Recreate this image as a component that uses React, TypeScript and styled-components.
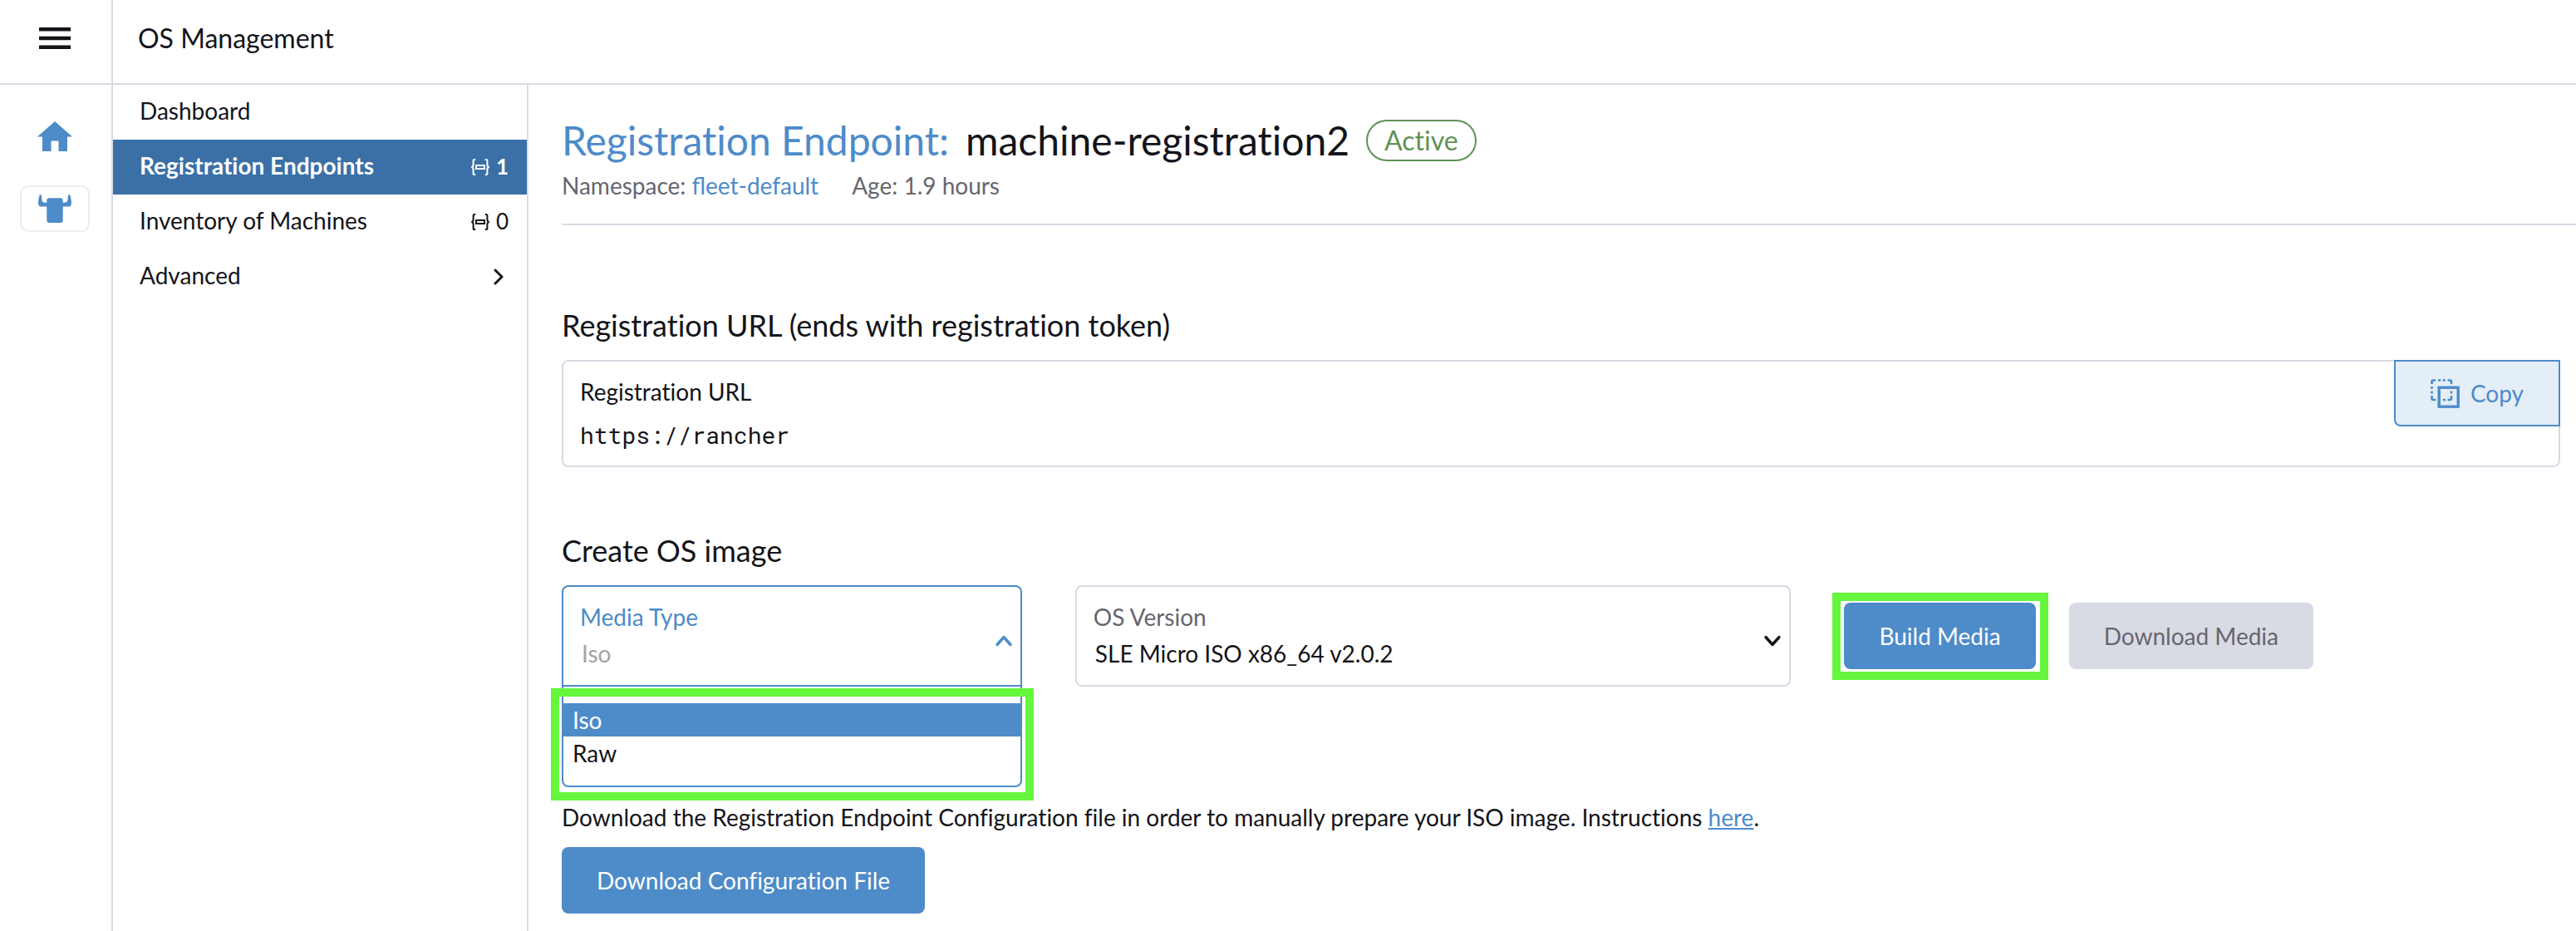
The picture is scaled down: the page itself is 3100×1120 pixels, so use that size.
import React, { useState } from 'react';
import styled, { createGlobalStyle, css } from 'styled-components';

const color = {
  text: '#141419',
  muted: '#66656f',
  faint: '#a3a3a6',
  border: '#d8dbe4',
  blue: '#4d8bc9',
  navActive: '#3b70a7',
  paleBlue: '#e4eef6',
  green: '#5f9156',
  mark: '#66f63e',
};

const GlobalStyle = createGlobalStyle`
  *, *::before, *::after { box-sizing: border-box; }
  body {
    margin: 0;
    background: #fff;
    color: ${color.text};
    font: 28px/36px Lato, "Open Sans", sans-serif;
    font-variant-ligatures: no-common-ligatures;
  }
  h1, h2, p, ul { margin: 0; padding: 0; font-weight: 400; }
  ul { list-style: none; }
  a { color: ${color.blue}; text-decoration: none; }
  svg { display: block; flex: none; }
  button, input, select {
    font: inherit;
    font-variant-ligatures: inherit;
    color: inherit;
    margin: 0;
  }
`;

const Page = styled.div`
  display: grid;
  grid-template: 102px 1fr / 136px 500px minmax(0, 1fr);
  min-height: 100vh;
`;

const MenuCell = styled.div`
  display: flex;
  align-items: center;
  justify-content: center;
  padding: 0 2px 8px 0;
  border-right: 2px solid ${color.border};
  border-bottom: 2px solid ${color.border};
`;

const IconButton = styled.button`
  padding: 0;
  border: 0;
  background: none;
  cursor: pointer;
`;

const Header = styled.header`
  grid-column: 2 / -1;
  display: flex;
  align-items: center;
  padding: 0 30px 8px;
  border-bottom: 2px solid ${color.border};
  font-size: 32px;
`;

const Rail = styled.nav`
  display: flex;
  flex-direction: column;
  align-items: center;
  gap: 31px;
  padding: 34px 2px 0 0;
  border-right: 2px solid ${color.border};
`;

const RailLink = styled.a<{ $boxed?: boolean }>`
  display: flex;
  align-items: center;
  justify-content: center;
  width: 84px;
  height: 56px;
  border: 2px solid ${(p) => (p.$boxed ? '#ececf2' : 'transparent')};
  border-radius: 10px;
`;

const SideNav = styled.nav`
  border-right: 2px solid ${color.border};
`;

const NavLink = styled.a<{ $active?: boolean }>`
  display: flex;
  align-items: center;
  justify-content: space-between;
  height: 66px;
  padding: 0 22px 0 32px;
  color: ${color.text};
  ${(p) =>
    p.$active &&
    css`
      background: ${color.navActive};
      color: #fff;
      font-weight: 700;
    `}
`;

const NavLabel = styled.span`
  padding-bottom: 4px;
`;

const Count = styled.span`
  display: flex;
  align-items: center;
  gap: 8px;
  font-size: 26px;
`;

const CountValue = styled.span`
  padding-bottom: 2px;
`;

const ArrowSlot = styled.span`
  padding-right: 6px;
`;

const Main = styled.main`
  padding: 40px 0 20px 40px;
`;

const Masthead = styled.div`
  padding-bottom: 27px;
  border-bottom: 2px solid ${color.border};
`;

const TitleRow = styled.div`
  display: flex;
  align-items: center;
  gap: 20px;
`;

const Title = styled.h1`
  font-size: 48px;
  line-height: 54px;
  a { margin-right: 20px; }
`;

const Badge = styled.span`
  padding: 0 20px;
  border: 2px solid ${color.green};
  border-radius: 25px;
  color: ${color.green};
  font-size: 32px;
  line-height: 46px;
`;

const Meta = styled.div`
  display: flex;
  gap: 40px;
  margin-top: 8px;
  color: ${color.muted};
  line-height: 38px;
  a { font-variant-ligatures: normal; }
`;

const Body = styled.div`
  padding-right: 19px;
`;

const Heading = styled.h2<{ $gap: number }>`
  margin: ${(p) => p.$gap}px 0 20px;
  font-size: 36px;
  line-height: 44px;
`;

const UrlBox = styled.div`
  position: relative;
  display: flex;
  flex-direction: column;
  gap: 17px;
  padding: 18px 20px;
  border: 2px solid ${color.border};
  border-radius: 8px;
`;

const UrlInput = styled.input`
  width: 100%;
  height: 36px;
  padding: 0;
  border: 0;
  outline: 0;
  background: none;
  font-family: "Roboto Mono", "DejaVu Sans Mono", "Liberation Mono", monospace;
`;

const CopyButton = styled.button`
  position: absolute;
  top: -2px;
  right: -2px;
  display: flex;
  align-items: center;
  gap: 13px;
  height: 80px;
  padding: 0 42px;
  border: 2px solid ${color.blue};
  border-radius: 0 0 0 8px;
  background: ${color.paleBlue};
  color: ${color.blue};
  cursor: pointer;
`;

const BuildRow = styled.div`
  display: grid;
  grid-template-columns: 9fr 14fr 14fr;
  align-items: center;
  gap: 64px;
`;

const Field = styled.div<{ $open?: boolean }>`
  position: relative;
  display: flex;
  flex-direction: column;
  gap: 4px;
  height: 122px;
  padding: 16px 20px;
  border: 2px solid ${(p) => (p.$open ? color.blue : color.border)};
  border-radius: ${(p) => (p.$open ? '8px 8px 0 0' : '8px')};
  line-height: 40px;
  color: ${(p) => (p.$open ? color.blue : color.text)};

  label { color: ${(p) => (p.$open ? color.blue : color.muted)}; }
  > svg {
    position: absolute;
    top: 56px;
    right: 8px;
    pointer-events: none;
  }
`;

const Select = styled.select<{ $faint?: boolean }>`
  appearance: none;
  width: 100%;
  height: 40px;
  padding: 0 2px;
  border: 0;
  outline: 0;
  background: none;
  color: ${(p) => (p.$faint ? color.faint : color.text)};
`;

const markBox = css`
  content: '';
  position: absolute;
  border: 10px solid ${color.mark};
  pointer-events: none;
`;

const Menu = styled.ul`
  position: absolute;
  top: 100%;
  left: -2px;
  right: -2px;
  height: 123px;
  padding-top: 20px;
  border: 2px solid ${color.blue};
  border-radius: 0 0 8px 8px;
  background: #fff;
  &::after {
    ${markBox}
    inset: 2px -16px -18px -15px;
  }
`;

const Option = styled.li<{ $active: boolean }>`
  padding: 0 11px;
  background: ${(p) => (p.$active ? color.blue : '#fff')};
  color: ${(p) => (p.$active ? '#fff' : color.text)};
  cursor: pointer;
`;

const Actions = styled.div`
  display: flex;
  gap: 40px;
`;

const Button = styled.button<{ $marked?: boolean }>`
  position: relative;
  height: 80px;
  padding: 0 42px;
  border: 0;
  border-radius: 8px;
  background: ${color.blue};
  color: #fff;
  white-space: nowrap;
  cursor: pointer;
  &:disabled {
    background: ${color.border};
    color: ${color.muted};
    cursor: not-allowed;
  }
  ${(p) =>
    p.$marked &&
    css`
      &::after {
        ${markBox}
        inset: -12px -15px -13px -14px;
      }
    `}
`;

const Note = styled.p`
  margin: 139px 0 18px;
  a { text-decoration: underline; }
`;

const MenuIcon = () => (
  <svg width="38" height="26" viewBox="0 0 38 26" fill="currentColor">
    <path d="M0 0h38v4.6H0zM0 10.8h38v4.4H0zM0 21.4h38V26H0z" />
  </svg>
);

const HomeIcon = () => (
  <svg width="42" height="36" viewBox="0 0 42 36" fill="currentColor">
    <path d="M21 0 42 18.5H36V36H25.5V23.5h-9V36H6V18.5H0z" />
  </svg>
);

const BullIcon = () => (
  <svg width="40" height="34" viewBox="0 0 40 34" fill="currentColor">
    <path d="M2.6 0C3.8 0 4.3 2 4.3 5.5c0 3 1.2 4.2 5.9 4.2V7.2q0-2.9 3-2.900h13.400q3 0 3 2.900v2.500c4.700 0 6-1.200 6-4.200C35.600 2 36.200 0 37.300 0 38.700 0 39 3.500 40 8.500 40 13 39 14.600 36.500 14.600H29.700V31q0 3-3 3H13.300q-3 0-3-3V14.600H3.500C1 14.600 0 13 0 9 .8 4 1.200 0 2.600 0z" />
  </svg>
);

const NamespacedIcon = () => (
  <svg width="22" height="20" viewBox="0 0 22 20" fill="none" stroke="currentColor" strokeWidth="2">
    <path d="M5.200 1H4Q2.600 1 2.600 2.600V7.500Q2.600 9.600.4 10 2.600 10.400 2.600 12.500v4.900Q2.600 19 4 19h1.200M16.800 1H18q1.400 0 1.400 1.600v4.900q0 2.100 2.200 2.500-2.200.4-2.200 2.500v4.900Q19.400 19 18 19h-1.200" />
    <path d="M6 8h10v4H6z" />
  </svg>
);

const ChevronRight = () => (
  <svg width="12" height="20" viewBox="0 0 12 20" fill="none" stroke="currentColor" strokeWidth="3" strokeLinecap="round" strokeLinejoin="round">
    <path d="M2 2l8 8-8 8" />
  </svg>
);

const Chevron = ({ up }: { up?: boolean }) => (
  <svg width="24" height="16" viewBox="0 0 24 16" fill="none" stroke="currentColor" strokeWidth="3.4" strokeLinecap="round" strokeLinejoin="round">
    <path d={up ? 'M4 13.500l8-9 8 9' : 'M4 4.500l8 9 8-9'} />
  </svg>
);

const CopyIcon = () => (
  <svg width="35" height="35" viewBox="0 0 35 35" fill="none" stroke="currentColor">
    <rect x="10.200" y="10.200" width="23" height="23" strokeWidth="3.400" />
    <g strokeWidth="2.600">
      <path d="M6 1.500H3Q1.500 1.500 1.500 3v3M20.500 1.500H23Q25 1.500 25 3v3M1.500 20v3q0 2 1.500 2h3.200M25 20v3q0 2-1.500 2h-3" />
      <path d="M9 1.500h3.200M14.700 1.500h3.200M1.500 9v2.800M1.500 14.600v2.800M25 14.600v2.800M15 25h3" />
    </g>
  </svg>
);

const mediaTypes = ['Iso', 'Raw'];

export default function App() {
  const [open, setOpen] = useState(true);
  const [media, setMedia] = useState('Iso');

  return (
    <>
      <GlobalStyle />
      <Page>
        <MenuCell>
          <IconButton aria-label="Menu"><MenuIcon /></IconButton>
        </MenuCell>
        <Header>OS Management</Header>

        <Rail aria-label="Apps">
          <RailLink href="#home" aria-label="Home"><HomeIcon /></RailLink>
          <RailLink href="#os" aria-label="OS Management" $boxed><BullIcon /></RailLink>
        </Rail>

        <SideNav aria-label="OS Management">
          <NavLink href="#dashboard"><NavLabel>Dashboard</NavLabel></NavLink>
          <NavLink href="#endpoints" $active>
            <NavLabel>Registration Endpoints</NavLabel>
            <Count><NamespacedIcon /><CountValue>1</CountValue></Count>
          </NavLink>
          <NavLink href="#inventory">
            <NavLabel>Inventory of Machines</NavLabel>
            <Count><NamespacedIcon /><CountValue>0</CountValue></Count>
          </NavLink>
          <NavLink href="#advanced">
            <NavLabel>Advanced</NavLabel>
            <ArrowSlot><ChevronRight /></ArrowSlot>
          </NavLink>
        </SideNav>

        <Main>
          <Masthead>
            <TitleRow>
              <Title><a href="#endpoints">Registration Endpoint:</a>machine-registration2</Title>
              <Badge>Active</Badge>
            </TitleRow>
            <Meta>
              <span>Namespace: <a href="#fleet-default">fleet-default</a></span>
              <span>Age: 1.9 hours</span>
            </Meta>
          </Masthead>

          <Body>
            <Heading $gap={98}>Registration URL (ends with registration token)</Heading>
            <UrlBox>
              <label htmlFor="url">Registration URL</label>
              <UrlInput id="url" readOnly value="https://rancher" />
              <CopyButton><CopyIcon />Copy</CopyButton>
            </UrlBox>

            <Heading $gap={78}>Create OS image</Heading>
            <BuildRow>
              <Field $open={open}>
                <label htmlFor="media">Media Type</label>
                <Select
                  id="media"
                  $faint={open}
                  value={media}
                  onChange={(e) => setMedia(e.target.value)}
                  onMouseDown={(e) => { e.preventDefault(); setOpen(!open); }}
                >
                  {mediaTypes.map((m) => <option key={m}>{m}</option>)}
                </Select>
                <Chevron up={open} />
                {open && (
                  <Menu role="listbox" aria-label="Media Type">
                    {mediaTypes.map((m) => (
                      <Option
                        key={m}
                        role="option"
                        aria-selected={m === media}
                        $active={m === media}
                        onClick={() => { setMedia(m); setOpen(false); }}
                      >
                        {m}
                      </Option>
                    ))}
                  </Menu>
                )}
              </Field>
              <Field>
                <label htmlFor="version">OS Version</label>
                <Select id="version">
                  <option>SLE Micro ISO x86_64 v2.0.2</option>
                </Select>
                <Chevron />
              </Field>
              <Actions>
                <Button $marked>Build Media</Button>
                <Button disabled>Download Media</Button>
              </Actions>
            </BuildRow>

            <Note>
              Download the Registration Endpoint Configuration file in order to manually prepare your ISO image. Instructions <a href="#docs">here</a>.
            </Note>
            <Button>Download Configuration File</Button>
          </Body>
        </Main>
      </Page>
    </>
  );
}
